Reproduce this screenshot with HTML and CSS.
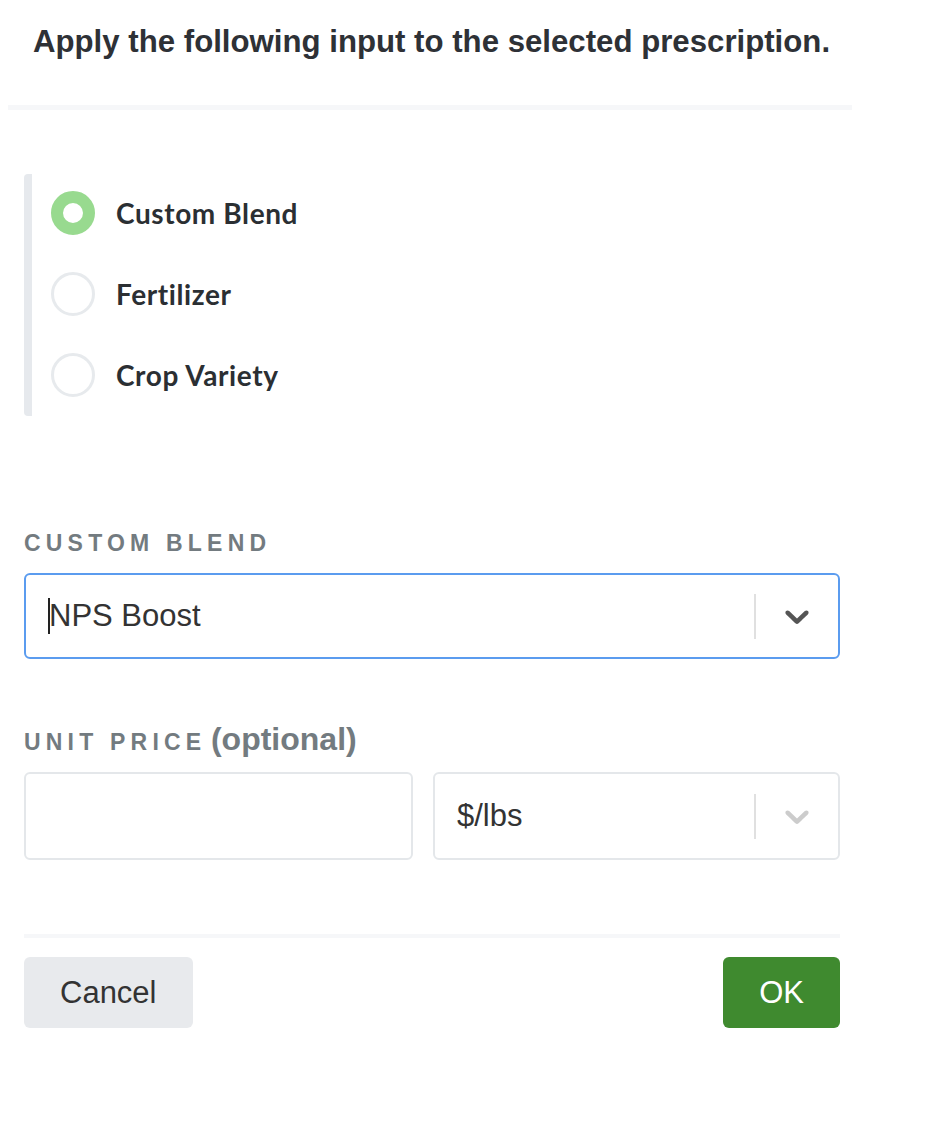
FILE: index.html
```html
<!DOCTYPE html>
<html lang="en">
<head>
  <meta charset="UTF-8">
  <meta name="viewport" content="width=device-width, initial-scale=1.0">
  <title>Apply Input</title>
  <link rel="stylesheet" href="styles.css">
</head>
<body>

  <div class="dialog">
    <header class="dialog-header">
      <h1>Apply the following input to the selected prescription.</h1>
    </header>

    <div class="dialog-body">
      <div class="radio-group">
        <label class="radio-option">
          <span class="radio checked"></span>
          <span class="radio-label">Custom Blend</span>
        </label>
        <label class="radio-option">
          <span class="radio"></span>
          <span class="radio-label">Fertilizer</span>
        </label>
        <label class="radio-option">
          <span class="radio"></span>
          <span class="radio-label">Crop Variety</span>
        </label>
      </div>

      <div class="field">
        <div class="field-label">Custom Blend</div>
        <div class="select focused">
          <div class="select-value"><span class="caret"></span>NPS Boost</div>
          <span class="select-separator"></span>
          <span class="select-arrow">
            <svg viewBox="0 0 20 20" width="40" height="40"><path d="M4.516 7.548c0.436-0.446 1.043-0.481 1.576 0l3.908 3.747 3.908-3.747c0.533-0.481 1.141-0.446 1.574 0 0.436 0.445 0.408 1.197 0 1.615-0.406 0.418-4.695 4.502-4.695 4.502-0.217 0.223-0.502 0.335-0.787 0.335s-0.57-0.112-0.789-0.335c0 0-4.287-4.084-4.695-4.502s-0.436-1.17 0-1.615z"/></svg>
          </span>
        </div>
      </div>

      <div class="field">
        <div class="field-label">Unit Price <span class="optional">(optional)</span></div>
        <div class="price-row">
          <input type="text" class="text-input">
          <div class="select">
            <div class="select-value">$/lbs</div>
            <span class="select-separator"></span>
            <span class="select-arrow">
              <svg viewBox="0 0 20 20" width="40" height="40"><path d="M4.516 7.548c0.436-0.446 1.043-0.481 1.576 0l3.908 3.747 3.908-3.747c0.533-0.481 1.141-0.446 1.574 0 0.436 0.445 0.408 1.197 0 1.615-0.406 0.418-4.695 4.502-4.695 4.502-0.217 0.223-0.502 0.335-0.787 0.335s-0.57-0.112-0.789-0.335c0 0-4.287-4.084-4.695-4.502s-0.436-1.17 0-1.615z"/></svg>
            </span>
          </div>
        </div>
      </div>

      <footer class="dialog-footer">
        <button class="btn btn-cancel">Cancel</button>
        <button class="btn btn-ok">OK</button>
      </footer>
    </div>
  </div>

</body>
</html>
```

FILE: styles.css
```css
/* General */
body {
  margin: 8px;
  font-family: 'Liberation Sans', Arial, sans-serif;
  background-color: #fff;
  color: #333;
}

.dialog {
  width: 844px;
}

/* Header */
.dialog-header {
  padding: 16px 0 0 25px;
  height: 102px;
  box-sizing: border-box;
  border-bottom: 5px solid #f6f7f9;
}

.dialog-header h1 {
  margin: 0;
  font-size: 31.2px;
  line-height: 36px;
  font-weight: bold;
  color: #2e3136;
}

/* Body */
.dialog-body {
  padding: 0 12px 0 16px;
}

.radio-group {
  margin-top: 64px;
  border-left: 8px solid #e6e9ed;
  border-radius: 4px;
  padding: 17px 0 19px 19px;
  display: flex;
  flex-direction: column;
  gap: 37px;
}

.radio-option {
  display: flex;
  align-items: center;
  gap: 21px;
}

.radio {
  width: 44px;
  height: 44px;
  box-sizing: border-box;
  border-radius: 50%;
  border: 3px solid #e7eaed;
  background-color: #fff;
}

.radio.checked {
  border: 12px solid #98da8f;
}

.radio-label {
  font-family: Lato, sans-serif;
  font-weight: bold;
  font-size: 28px;
  letter-spacing: 0.6px;
  color: #2b2f33;
}

/* Fields */
.field {
  margin-top: 113px;
}

.field + .field {
  margin-top: 66px;
}

.field-label {
  font-size: 23px;
  font-weight: bold;
  text-transform: uppercase;
  letter-spacing: 5.2px;
  color: #737b80;
  margin-bottom: 16px;
  line-height: 28px;
}

.field-label .optional {
  margin-left: -7px;
  text-transform: none;
  letter-spacing: 0;
  font-size: 32px;
}

.select {
  display: flex;
  align-items: center;
  height: 88px;
  box-sizing: border-box;
  border: 2px solid #e4e7ea;
  border-radius: 6px;
  background-color: #fff;
}

.select.focused {
  height: 86px;
  border-color: #5b9cef;
}

.select-value {
  flex: 1;
  padding-left: 22px;
  font-size: 31px;
  color: #333;
  display: flex;
  align-items: center;
}

.caret {
  width: 2px;
  height: 36px;
  background-color: #222;
  margin-right: -1px;
}

.select-separator {
  width: 2px;
  height: 45px;
  background-color: #e0e0e0;
}

.select-arrow {
  width: 82px;
  display: flex;
  justify-content: center;
  fill: #ccc;
}

.select.focused .select-arrow {
  fill: #555;
}

.price-row {
  display: grid;
  grid-template-columns: 389px 1fr;
  gap: 20px;
}

.text-input {
  height: 88px;
  box-sizing: border-box;
  border: 2px solid #e4e7ea;
  border-radius: 6px;
  font: inherit;
}

/* Footer */
.dialog-footer {
  margin-top: 74px;
  border-top: 4px solid #f6f7f9;
  padding-top: 19px;
  display: flex;
  justify-content: space-between;
}

.btn {
  height: 71px;
  padding: 0 36px;
  border: none;
  border-radius: 6px;
  font-family: 'Liberation Sans', Arial, sans-serif;
  font-size: 31px;
  cursor: pointer;
}

.btn-cancel {
  background-color: #e8eaed;
  color: #333;
}

.btn-ok {
  background-color: #3f8a2f;
  color: #fff;
}
```
